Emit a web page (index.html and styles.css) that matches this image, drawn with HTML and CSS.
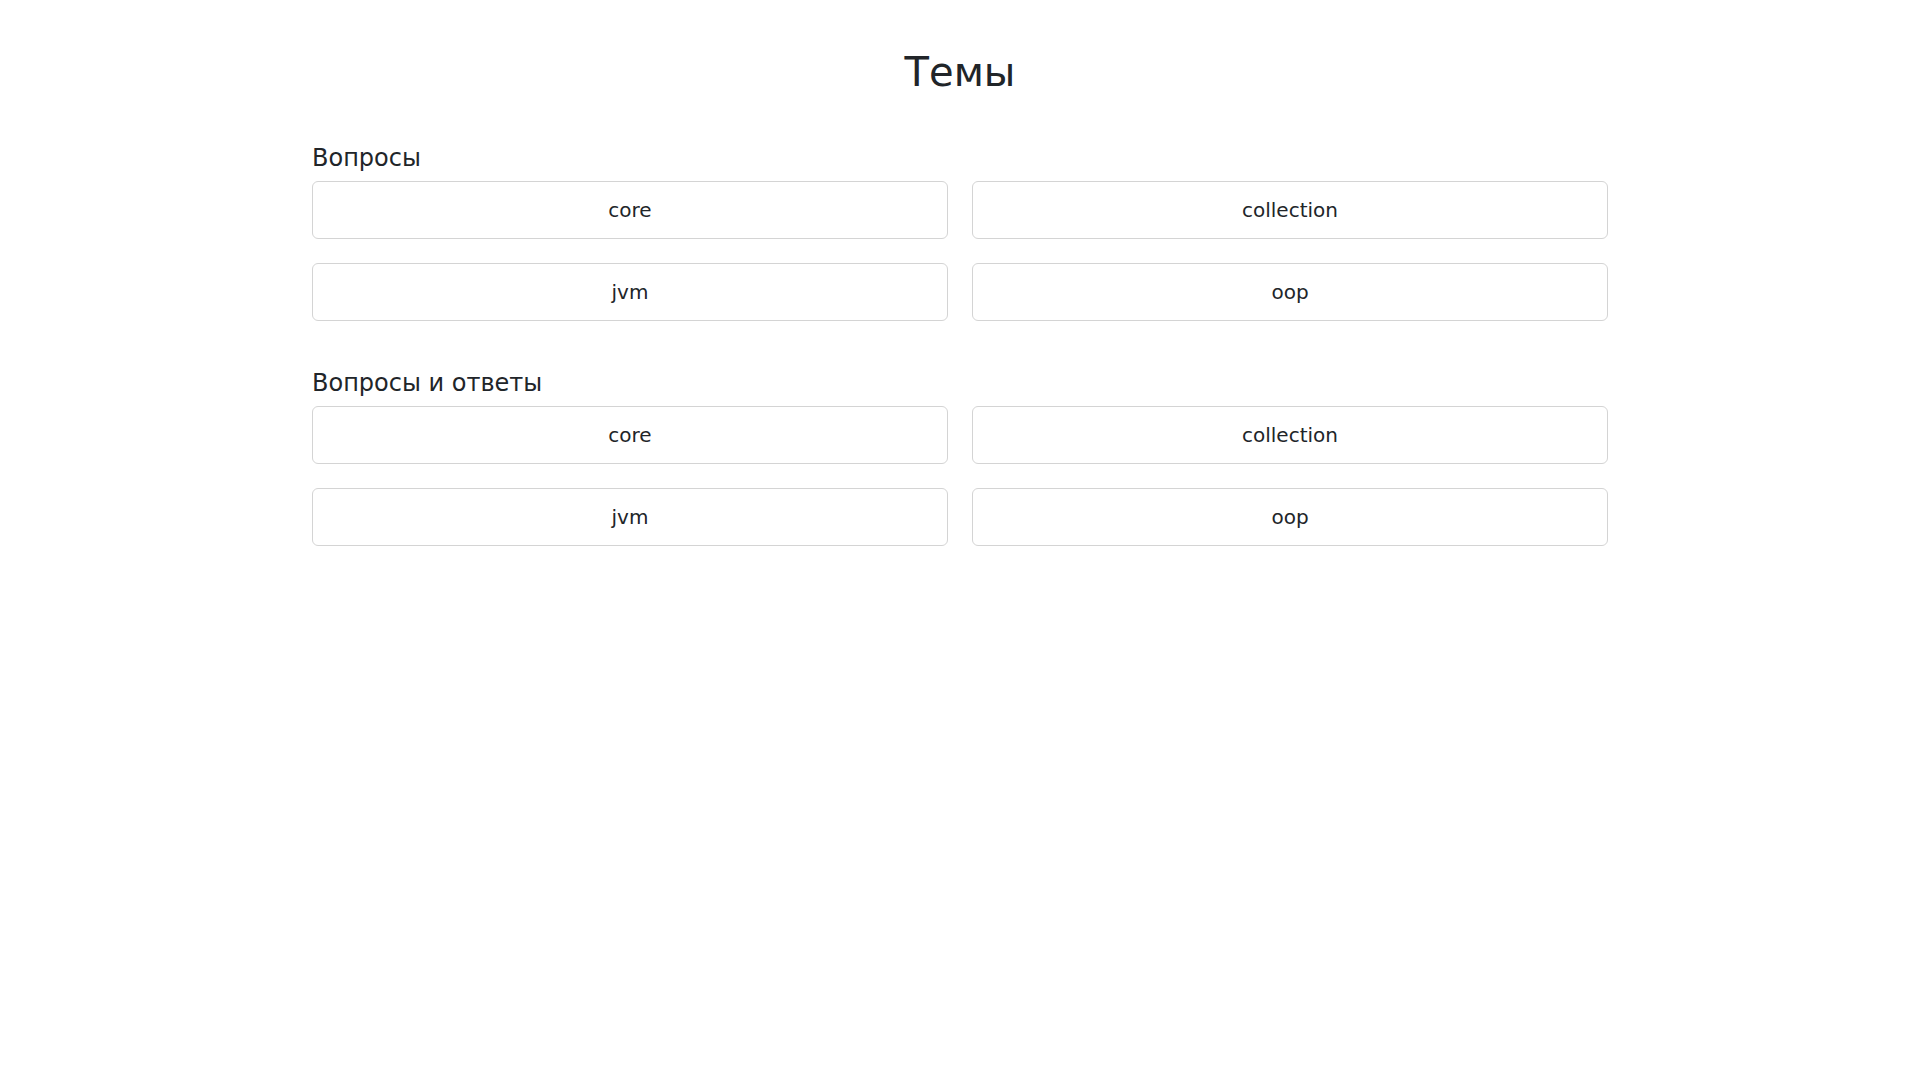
FILE: index.html
```html
<!DOCTYPE html>
<html lang="ru">
<head>
<meta charset="utf-8">
<title>Темы</title>
<link rel="stylesheet" href="styles.css">
</head>
<body>
<main class="container">
  <h1 class="page-title">Темы</h1>
  <section class="topic-group">
    <h4 class="group-title">Вопросы</h4>
    <div class="topic-grid">
      <a class="topic-btn" href="#">core</a>
      <a class="topic-btn" href="#">collection</a>
      <a class="topic-btn" href="#">jvm</a>
      <a class="topic-btn" href="#">oop</a>
    </div>
  </section>
  <section class="topic-group">
    <h4 class="group-title">Вопросы и ответы</h4>
    <div class="topic-grid">
      <a class="topic-btn" href="#">core</a>
      <a class="topic-btn" href="#">collection</a>
      <a class="topic-btn" href="#">jvm</a>
      <a class="topic-btn" href="#">oop</a>
    </div>
  </section>
</main>
</body>
</html>
```
FILE: styles.css
```css
html, body {
  margin: 0;
  padding: 0;
  background: #fff;
}
body {
  font-family: "DejaVu Sans", sans-serif;
  color: #212529;
  font-size: 16px;
  line-height: 1.5;
}
.container {
  max-width: 1296px;
  margin: 0 auto;
  padding: 48px 12px 0;
}
.page-title {
  margin: 0 0 48px;
  font-size: 40px;
  font-weight: 400;
  line-height: 1.2;
  text-align: center;
}
.topic-group + .topic-group {
  margin-top: 48px;
}
.group-title {
  margin: 0 0 8px;
  font-size: 24px;
  font-weight: 400;
  line-height: 1.2;
}
.topic-grid {
  display: grid;
  grid-template-columns: 1fr 1fr;
  gap: 24px;
}
.topic-btn {
  display: block;
  padding: 13px 16px;
  font-size: 20px;
  line-height: 30px;
  text-align: center;
  color: #212529;
  text-decoration: none;
  border: 1px solid #d4d4d4;
  border-radius: 6px;
  background: #fff;
}
```
